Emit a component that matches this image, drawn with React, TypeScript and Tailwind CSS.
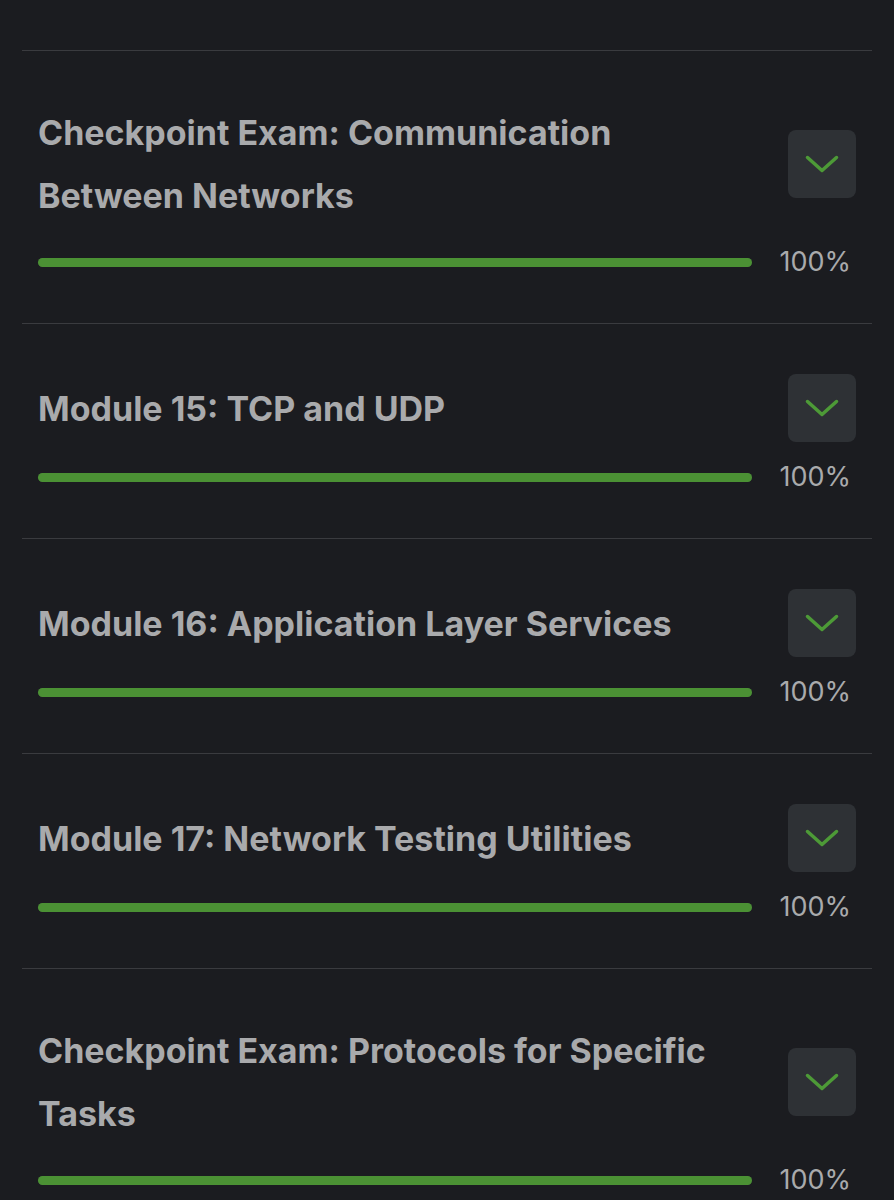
import React from "react";

type Item = { title: string; pct: number };

const items: Item[] = [
  { title: "Checkpoint Exam: Communication Between Networks", pct: 100 },
  { title: "Module 15: TCP and UDP", pct: 100 },
  { title: "Module 16: Application Layer Services", pct: 100 },
  { title: "Module 17: Network Testing Utilities", pct: 100 },
  { title: "Checkpoint Exam: Protocols for Specific Tasks", pct: 100 },
];

function Chevron() {
  return (
    <svg width="36" height="36" viewBox="0 0 36 36" fill="none" stroke="#4d9a37" strokeWidth="3.5" strokeLinecap="round" strokeLinejoin="round">
      <path d="M3.5 11.5L18 24.5L32.5 11.5" />
    </svg>
  );
}

function Section({ item }: { item: Item }) {
  return (
    <div className="border-t border-[#3a3b3f] px-4 pt-[50px] pb-[46px]">
      <div className="flex items-center gap-[50px]">
        <h2 className="flex-1 text-[34px] font-bold leading-[63px] text-[#a9aaac]">{item.title}</h2>
        <button className="flex h-[68px] w-[68px] shrink-0 items-center justify-center rounded-lg bg-[#2e3135]">
          <Chevron />
        </button>
      </div>
      <div className="mt-[20px] flex items-center">
        <div className="h-[9px] flex-1 rounded-full bg-[#2e3135]">
          <div className="h-full rounded-full bg-[#4b9134]" style={{ width: `${item.pct}%` }} />
        </div>
        <span className="w-[104px] pr-[5px] text-right text-[27px] leading-[30px] text-[#a9aaac]">{item.pct}%</span>
      </div>
    </div>
  );
}

export default function App() {
  return (
    <div className="min-h-[1200px] bg-[#1b1c20] px-[22px] pt-[50px]" style={{ fontFamily: "Inter, 'Noto Sans', sans-serif" }}>
      {items.map((it) => (
        <Section key={it.title} item={it} />
      ))}
    </div>
  );
}
